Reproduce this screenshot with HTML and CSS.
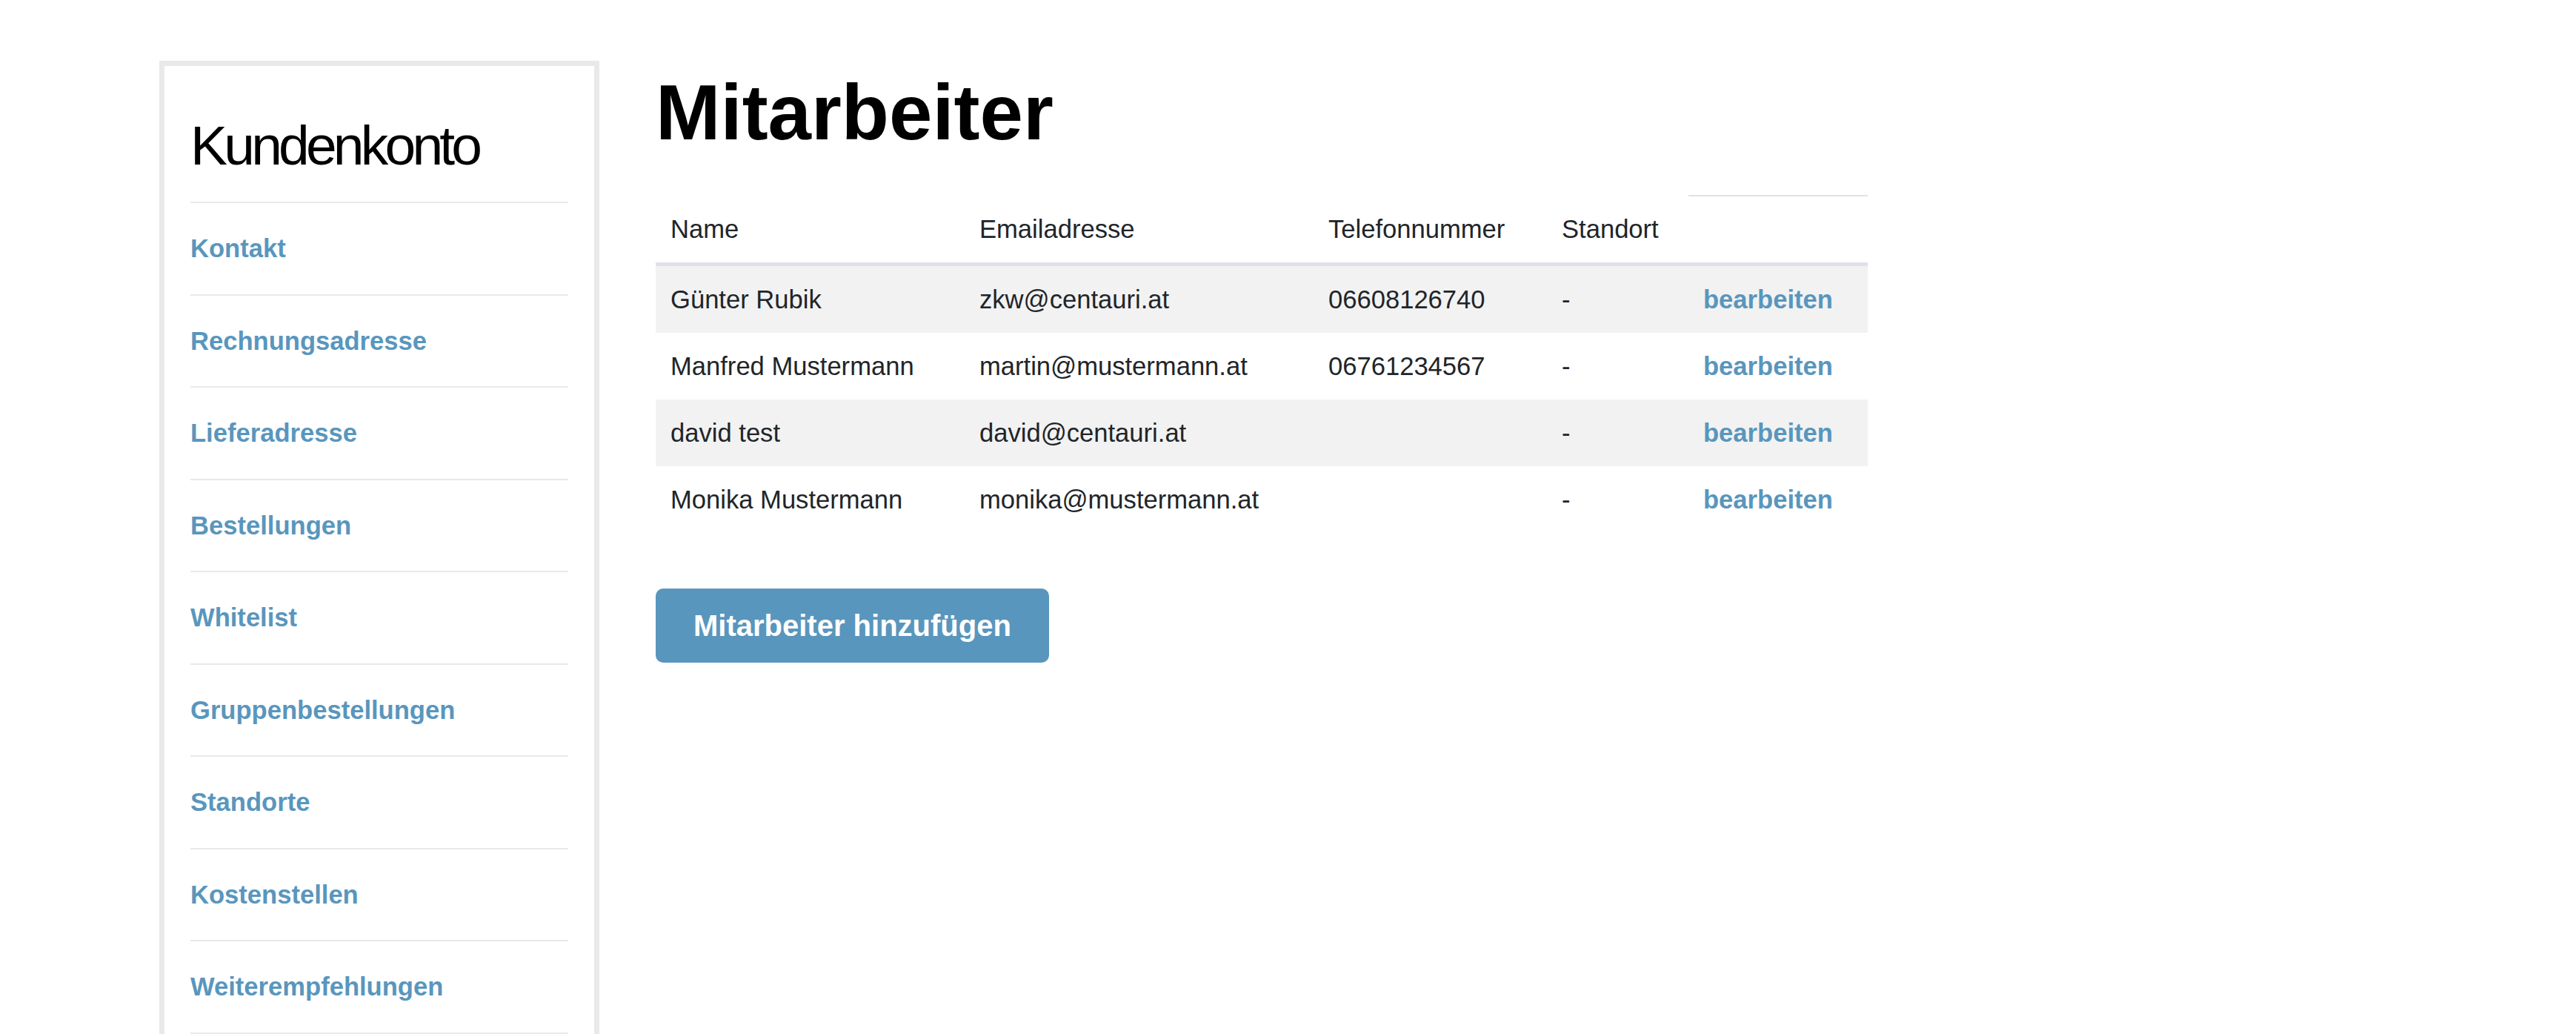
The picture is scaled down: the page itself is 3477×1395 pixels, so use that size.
FILE: index.html
```html
<!DOCTYPE html>
<html lang="de">
<head>
  <meta charset="UTF-8">
  <meta name="viewport" content="width=device-width, initial-scale=1.0">
  <title>Mitarbeiter</title>
  <link rel="stylesheet" href="styles.css">
</head>
<body>
  <div class="page">
    <aside class="account-nav">
      <h3>Kundenkonto</h3>
      <ul>
        <li><a href="#">Kontakt</a></li>
        <li><a href="#">Rechnungsadresse</a></li>
        <li><a href="#">Lieferadresse</a></li>
        <li><a href="#">Bestellungen</a></li>
        <li><a href="#">Whitelist</a></li>
        <li><a href="#">Gruppenbestellungen</a></li>
        <li><a href="#">Standorte</a></li>
        <li><a href="#">Kostenstellen</a></li>
        <li><a href="#">Weiterempfehlungen</a></li>
      </ul>
    </aside>

    <main class="content">
      <h1>Mitarbeiter</h1>
      <table class="staff">
        <colgroup>
          <col class="col-name">
          <col class="col-mail">
          <col class="col-phone">
          <col class="col-place">
          <col class="col-edit">
        </colgroup>
        <thead>
          <tr>
            <th>Name</th>
            <th>Emailadresse</th>
            <th>Telefonnummer</th>
            <th>Standort</th>
            <th class="edit"></th>
          </tr>
        </thead>
        <tbody>
          <tr>
            <td>Günter Rubik</td>
            <td>zkw@centauri.at</td>
            <td>06608126740</td>
            <td>-</td>
            <td><a href="#">bearbeiten</a></td>
          </tr>
          <tr>
            <td>Manfred Mustermann</td>
            <td>martin@mustermann.at</td>
            <td>06761234567</td>
            <td>-</td>
            <td><a href="#">bearbeiten</a></td>
          </tr>
          <tr>
            <td>david test</td>
            <td>david@centauri.at</td>
            <td></td>
            <td>-</td>
            <td><a href="#">bearbeiten</a></td>
          </tr>
          <tr>
            <td>Monika Mustermann</td>
            <td>monika@mustermann.at</td>
            <td></td>
            <td>-</td>
            <td><a href="#">bearbeiten</a></td>
          </tr>
        </tbody>
      </table>

      <a href="#" class="btn">Mitarbeiter hinzufügen</a>
    </main>
  </div>
</body>
</html>
```

FILE: styles.css
```css
body {
  margin: 0;
  font-family: "Liberation Sans", Arial, sans-serif;
  font-size: 34.6px;
  line-height: 52px;
  color: #212529;
  background: #ffffff;
}

a {
  color: #5996bd;
  text-decoration: none;
}

.page {
  display: flex;
  align-items: flex-start;
  gap: 76px;
  padding: 82px 0 0 215px;
}

/* sidebar */
.account-nav {
  width: 594px;
  flex-shrink: 0;
  box-sizing: border-box;
  border: 7px solid #e9e9e9;
  padding: 0 35px;
}

.account-nav h3 {
  margin: 0;
  padding: 62px 0 31px;
  font-size: 75px;
  line-height: 90px;
  font-weight: normal;
  letter-spacing: -4.8px;
  color: #000000;
  border-bottom: 2px solid #e9e9e9;
}

.account-nav ul {
  list-style: none;
  margin: 0;
  padding: 0;
}

.account-nav li {
  padding: 35px 0 35.5px;
  border-bottom: 2px solid #e9e9e9;
}

.account-nav li a {
  font-weight: bold;
}

/* main column */
.content {
  padding-top: 7px;
}

.content h1 {
  margin: 0 0 49px;
  font-size: 105px;
  line-height: 125px;
  font-weight: bold;
  color: #000000;
}

.staff {
  width: 1636px;
  table-layout: fixed;
  border-collapse: separate;
  border-spacing: 0;
}

.col-name { width: 417px; }
.col-mail { width: 471px; }
.col-phone { width: 315px; }
.col-place { width: 191px; }
.col-edit { width: 242px; }

.staff th,
.staff td {
  padding: 19px 20px;
  text-align: left;
  white-space: nowrap;
}

.staff th {
  font-weight: normal;
  vertical-align: bottom;
  padding-top: 18px;
  border-top: 2px solid transparent;
  border-bottom: 5px solid #dee2e6;
}

.staff th.edit {
  border-top-color: #dee2e6;
}

.staff tbody tr:nth-child(odd) {
  background: #f2f2f2;
}

.staff td a {
  font-weight: bold;
}

.btn {
  display: inline-block;
  margin-top: 75px;
  padding: 20px 51px;
  font-size: 40px;
  line-height: 60px;
  font-weight: bold;
  color: #ffffff;
  background: #5996bd;
  border-radius: 10px;
}
```
